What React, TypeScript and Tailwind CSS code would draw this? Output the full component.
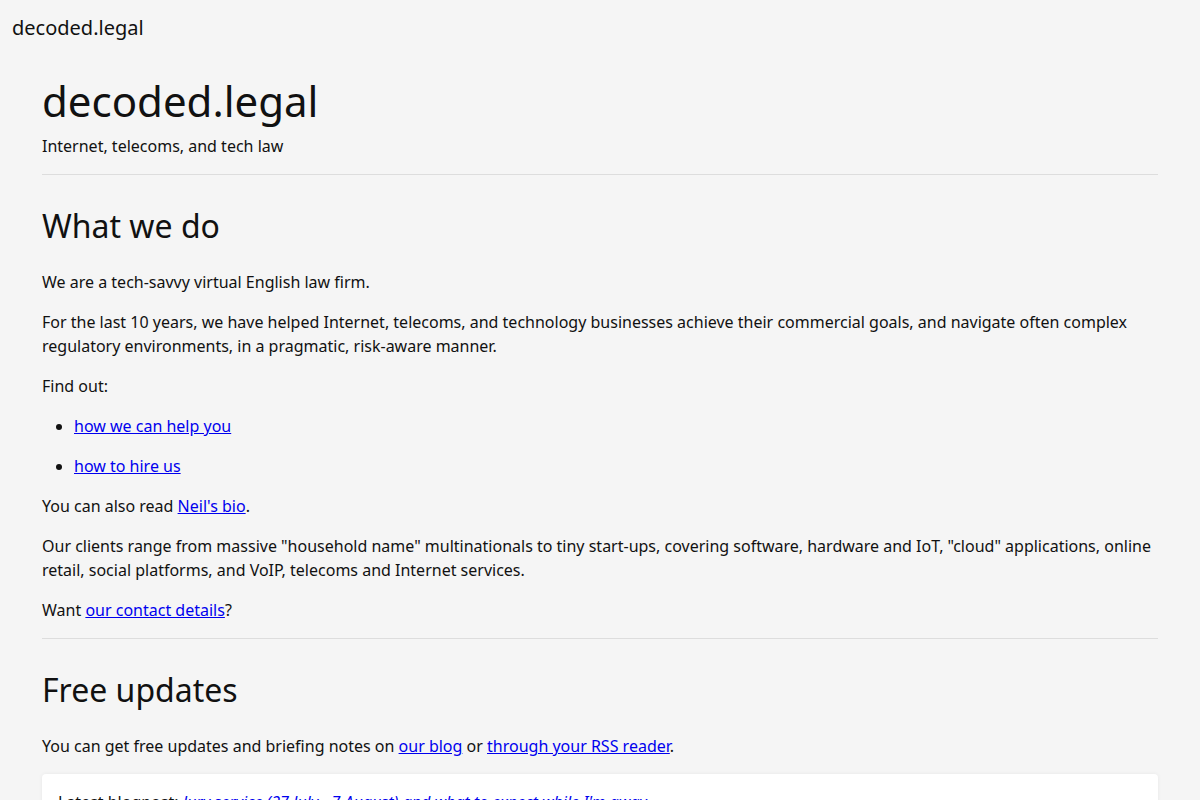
import React from "react";

const link = "text-[#0000ee] underline";

export default function App() {
  return (
    <div className="min-h-screen bg-[#f5f5f5] font-['Noto_Sans',sans-serif] text-[16px] leading-[24px] text-[#111]">
      <header className="px-3 pt-3">
        <div className="text-[20px] leading-[32px]">decoded.legal</div>
      </header>
      <main className="mx-[42px]">
        <div className="pt-[27px] pb-[16px] border-b border-[#ddd]">
          <h1 className="text-[42px] leading-[60px]">decoded.legal</h1>
          <p className="mt-[3px]">Internet, telecoms, and tech law</p>
        </div>

        <section className="border-b border-[#ddd] pb-[16px]">
          <h2 className="mt-[27px] mb-[20px] text-[32px] leading-[48px]">What we do</h2>
          <p className="mb-4">We are a tech-savvy virtual English law firm.</p>
          <p className="mb-4">
            For the last 10 years, we have helped Internet, telecoms, and technology businesses achieve their
            commercial goals, and navigate often complex regulatory environments, in a pragmatic, risk-aware manner.
          </p>
          <p className="mb-4">Find out:</p>
          <ul className="list-disc pl-8 mb-4 flex flex-col gap-4">
            <li>
              <a href="#" className={link}>how we can help you</a>
            </li>
            <li>
              <a href="#" className={link}>how to hire us</a>
            </li>
          </ul>
          <p className="mb-4">
            You can also read <a href="#" className={link}>Neil's bio</a>.
          </p>
          <p className="mb-4">
            Our clients range from massive "household name" multinationals to tiny start-ups, covering software,
            hardware and IoT, "cloud" applications, online retail, social platforms, and VoIP, telecoms and Internet
            services.
          </p>
          <p>
            Want <a href="#" className={link}>our contact details</a>?
          </p>
        </section>

        <section>
          <h2 className="mt-[27px] mb-[20px] text-[32px] leading-[48px]">Free updates</h2>
          <p className="mb-4">
            You can get free updates and briefing notes on <a href="#" className={link}>our blog</a> or{" "}
            <a href="#" className={link}>through your RSS reader</a>.
          </p>
          <div className="rounded bg-white px-4 py-4 shadow-[0_0_4px_rgba(0,0,0,0.06)]">
            <p>
              Latest blogpost:{" "}
              <a href="#" className={`${link} italic`}>
                Jury service (27 July - 7 August) and what to expect while I'm away
              </a>
            </p>
          </div>
        </section>
      </main>
    </div>
  );
}
